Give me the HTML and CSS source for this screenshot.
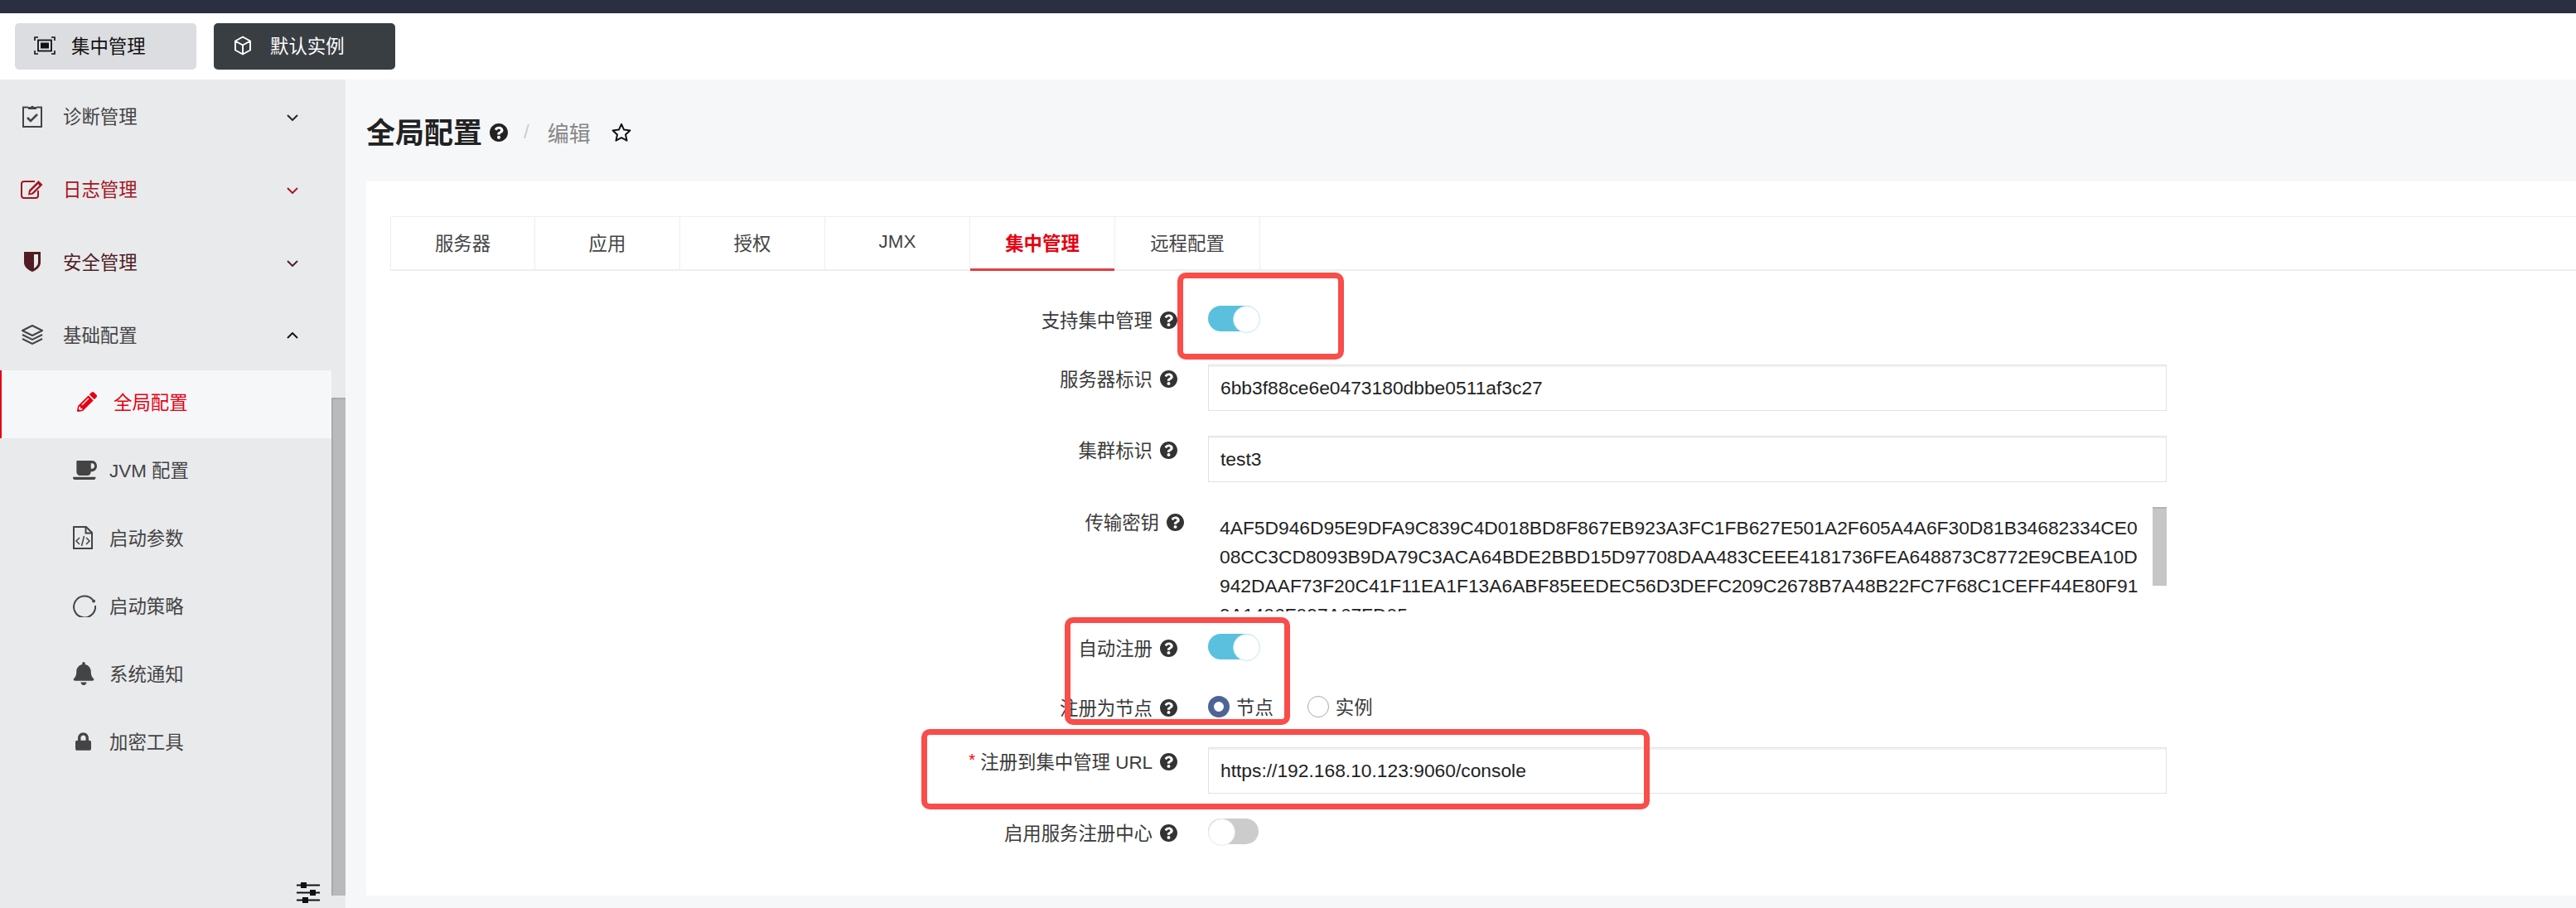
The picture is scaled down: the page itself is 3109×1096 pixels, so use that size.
FILE: index.html
```html
<!DOCTYPE html>
<html lang="zh-CN">
<head>
    <meta charset="UTF-8">
    <title>全局配置</title>
    <link rel="stylesheet" href="styles.css">
</head>
<body>
    <!-- shared icons -->
    <svg class="sprite" xmlns="http://www.w3.org/2000/svg">
        <symbol id="i-help" viewBox="8 8 496 496"><path d="M504 256c0 136.997-111.043 248-248 248S8 392.997 8 256C8 119.083 119.043 8 256 8s248 111.083 248 248zM262.655 90c-54.497 0-89.255 22.957-116.549 63.758-3.536 5.286-2.353 12.415 2.715 16.258l34.699 26.31c5.205 3.947 12.621 3.008 16.665-2.122 17.864-22.658 30.113-35.797 57.303-35.797 20.429 0 45.698 13.148 45.698 32.958 0 14.976-12.363 22.667-32.534 33.976C247.128 238.528 216 254.941 216 296v4c0 6.627 5.373 12 12 12h56c6.627 0 12-5.373 12-12v-1.333c0-28.462 83.186-29.647 83.186-106.667 0-58.002-60.165-102-116.531-102zM256 338c-25.365 0-46 20.635-46 46 0 25.364 20.635 46 46 46s46-20.636 46-46c0-25.365-20.635-46-46-46z"/></symbol>
        <symbol id="i-down" viewBox="0 0 14 8"><path d="M1 1l6 6 6-6" fill="none" stroke="currentColor" stroke-width="1.9"/></symbol>
    </svg>

    <div class="top-strip"></div>

    <!-- Top toolbar -->
    <div class="toolbar">
        <div class="tool-btn tool-btn-light">
            <svg width="26" height="22" viewBox="0 0 26 22"><path d="M1 5V1h4M21 1h4v4M25 17v4h-4M5 21H1v-4" fill="none" stroke="#111" stroke-width="1.6"/><rect x="5" y="4.5" width="16" height="13" fill="none" stroke="#111" stroke-width="1.8"/><rect x="8" y="7.5" width="10" height="7" fill="#111"/></svg>
            <span class="btn-text">集中管理</span>
        </div>
        <div class="tool-btn tool-btn-dark">
            <svg width="22" height="24" viewBox="0 0 22 24"><path d="M11 1.5l9 5v11l-9 5-9-5v-11zM2 6.5l9 5 9-5M11 11.5v11" fill="none" stroke="#fff" stroke-width="2" stroke-linejoin="round"/></svg>
            <span class="btn-text">默认实例</span>
        </div>
    </div>

    <div class="main">
        <!-- Left sidebar -->
        <aside class="sidebar">
            <div class="nav">
                <div class="nav-item">
                    <span class="nav-ico"><svg width="24" height="28" viewBox="0 0 24 28"><path d="M7 3.5H1v23.500h22V3.500h-6" fill="none" stroke="currentColor" stroke-width="2"/><path d="M7 6V3h3.200a2 2 0 0 1 3.600 0H17v3z" fill="currentColor"/><path d="M6 16l4 4 8-8" fill="none" stroke="currentColor" stroke-width="2.600"/></svg></span>
                    <span class="nav-text">诊断管理</span>
                    <svg class="chevron" width="14" height="8"><use href="#i-down"/></svg>
                </div>
                <div class="nav-item nav-item-log">
                    <span class="nav-ico"><svg width="28" height="23" viewBox="0 0 28 23"><path d="M21 13v6a3 3 0 0 1-3 3H4a3 3 0 0 1-3-3V5a3 3 0 0 1 3-3h13" fill="none" stroke="currentColor" stroke-width="2"/><path d="M10 12.500L21.500 1l5 5L15 17.500l-6 1zM12 14l-1 2.500 2.500-.8 9-9-1.500-1.500z" fill="currentColor" fill-rule="evenodd"/></svg></span>
                    <span class="nav-text">日志管理</span>
                    <svg class="chevron" width="14" height="8"><use href="#i-down"/></svg>
                </div>
                <div class="nav-item nav-item-safe">
                    <span class="nav-ico"><svg width="20" height="24" viewBox="0 0 20 24"><path d="M0 0h20v13c0 5-5 9-10 11C5 22 0 18 0 13z" fill="currentColor"/><path d="M12 3h5v10c0 3-2.500 5.500-5 7z" fill="#e9eaec"/></svg></span>
                    <span class="nav-text">安全管理</span>
                    <svg class="chevron" width="14" height="8"><use href="#i-down"/></svg>
                </div>
                <div class="nav-item">
                    <span class="nav-ico"><svg width="28" height="24" viewBox="0 0 28 24"><path d="M14 1l12 6-12 6L2 7z" fill="none" stroke="currentColor" stroke-width="2" stroke-linejoin="round"/><path d="M2 12l12 6 12-6M2 17l12 6 12-6" fill="none" stroke="currentColor" stroke-width="2"/></svg></span>
                    <span class="nav-text">基础配置</span>
                    <svg class="chevron chevron-up" width="14" height="8"><use href="#i-down"/></svg>
                </div>

                <div class="sub-nav">
                    <div class="sub-item sub-item-active">
                        <span class="sub-ico"><svg width="24" height="24" viewBox="0 0 512 512" fill="currentColor"><path d="M497.9 142.100l-46.100 46.100c-4.700 4.700-12.300 4.700-17 0l-111-111c-4.700-4.700-4.700-12.300 0-17l46.100-46.100c18.700-18.700 49.100-18.700 67.900 0l60.100 60.100c18.800 18.700 18.800 49.100 0 67.900zM284.200 99.800L21.600 362.400.4 483.900c-2.900 16.400 11.400 30.600 27.800 27.800l121.500-21.300 262.600-262.600c4.700-4.700 4.700-12.300 0-17l-111-111c-4.800-4.700-12.400-4.700-17.100 0zM124.100 339.900c-5.500-5.500-5.500-14.300 0-19.800l154-154c5.500-5.500 14.300-5.500 19.800 0s5.500 14.300 0 19.800l-154 154c-5.500 5.500-14.300 5.500-19.800 0zM88 424h48v36.300l-64.500 11.300-31.100-31.100L51.700 376H88v48z"/></svg></span>
                        <span class="nav-text">全局配置</span>
                    </div>
                    <div class="sub-item">
                        <span class="sub-ico"><svg width="29" height="23" viewBox="0 32 640 448" preserveAspectRatio="none" fill="currentColor"><path d="M192 384h192c53 0 96-43 96-96h32c70.600 0 128-57.400 128-128S582.600 32 512 32H120c-13.300 0-24 10.700-24 24v232c0 53 43 96 96 96zM512 96c35.300 0 64 28.700 64 64s-28.700 64-64 64h-32V96h32zm47.700 384H48.300c-47.600 0-61-64-36-64h583.300c25 0 11.800 64-35.900 64z"/></svg></span>
                        <span class="nav-text">JVM 配置</span>
                    </div>
                    <div class="sub-item">
                        <span class="sub-ico"><svg width="24" height="28" viewBox="0 0 24 28"><path d="M1 1h15l7 7v19H1z" fill="none" stroke="currentColor" stroke-width="2"/><path d="M15.500 1v7.500H23" fill="none" stroke="currentColor" stroke-width="2"/><path d="M8 14l-4 4 4 4M16 14l4 4-4 4M13.500 12l-3 12" fill="none" stroke="currentColor" stroke-width="1.500"/></svg></span>
                        <span class="nav-text">启动参数</span>
                    </div>
                    <div class="sub-item">
                        <span class="sub-ico"><svg width="28" height="28" viewBox="0 0 28 28"><path d="M24 7A13 13 0 1 0 27 14" fill="none" stroke="currentColor" stroke-width="2"/><circle cx="25" cy="8.500" r="2" fill="currentColor"/></svg></span>
                        <span class="nav-text">启动策略</span>
                    </div>
                    <div class="sub-item">
                        <span class="sub-ico"><svg width="26" height="28" viewBox="0 0 448 512" fill="currentColor"><path d="M224 512c35.320 0 63.970-28.650 63.970-64H160.030c0 35.350 28.650 64 63.970 64zm215.390-149.710c-19.320-20.760-55.470-51.990-55.470-154.290 0-77.700-54.480-139.900-127.940-155.160V32c0-17.670-14.320-32-31.980-32s-31.980 14.330-31.980 32v20.840C118.560 68.100 64.080 130.300 64.080 208c0 102.300-36.150 133.530-55.470 154.290-6 6.450-8.660 14.160-8.610 21.710.11 16.400 12.980 32 32.100 32h383.800c19.120 0 32-15.600 32.100-32 .05-7.550-2.610-15.270-8.610-21.710z"/></svg></span>
                        <span class="nav-text">系统通知</span>
                    </div>
                    <div class="sub-item">
                        <span class="sub-ico sub-ico-lock"><svg width="19" height="22" viewBox="0 0 448 512" fill="currentColor"><path d="M400 224h-24v-72C376 68.200 307.800 0 224 0S72 68.200 72 152v72H48c-26.500 0-48 21.500-48 48v192c0 26.500 21.500 48 48 48h352c26.500 0 48-21.500 48-48V272c0-26.500-21.500-48-48-48zm-104 0H152v-72c0-39.700 32.300-72 72-72s72 32.300 72 72v72z"/></svg></span>
                        <span class="nav-text">加密工具</span>
                    </div>
                </div>

                <svg class="sliders" width="28" height="25" viewBox="0 0 28 25"><path d="M0 3.500h28M0 12.500h28M0 21.500h28" stroke="#111" stroke-width="2"/><rect x="5" y="0" width="7" height="7" fill="#111"/><rect x="16" y="9" width="7" height="7" fill="#111"/><rect x="7" y="18" width="7" height="7" fill="#111"/></svg>
            </div>
            <div class="side-scroll"><div class="side-thumb"></div></div>
        </aside>

        <!-- Main content -->
        <div class="content">
            <div class="page-head">
                <h1>全局配置</h1>
                <svg class="help help-title"><use href="#i-help"/></svg>
                <span class="crumb-sep">/</span>
                <span class="crumb">编辑</span>
                <svg class="star" width="24" height="24" viewBox="0 0 24 24"><path d="M12 1.800l3.100 6.800 7.300.8-5.400 5 1.500 7.300L12 18.200l-6.500 3.500L7 14.400l-5.400-5 7.300-.8z" fill="none" stroke="#111" stroke-width="2" stroke-linejoin="round"/></svg>
            </div>

            <div class="card">
                <div class="tabs">
                    <div class="tab">服务器</div>
                    <div class="tab">应用</div>
                    <div class="tab">授权</div>
                    <div class="tab">JMX</div>
                    <div class="tab tab-active">集中管理</div>
                    <div class="tab">远程配置</div>
                </div>

                <div class="form">
                    <div class="form-label">支持集中管理<svg class="help"><use href="#i-help"/></svg></div>
                    <div class="form-control row-first"><span class="switch switch-on"></span></div>

                    <div class="form-label">服务器标识<svg class="help"><use href="#i-help"/></svg></div>
                    <div class="form-control"><div class="input">6bb3f88ce6e0473180dbbe0511af3c27</div></div>

                    <div class="form-label">集群标识<svg class="help"><use href="#i-help"/></svg></div>
                    <div class="form-control"><div class="input">test3</div></div>

                    <div class="form-label form-label-key">传输密钥<svg class="help"><use href="#i-help"/></svg></div>
                    <div class="form-control">
                        <div class="textarea">
                            <div class="textarea-text">4AF5D946D95E9DFA9C839C4D018BD8F867EB923A3FC1FB627E501A2F605A4A6F30D81B34682334CE0<br>08CC3CD8093B9DA79C3ACA64BDE2BBD15D97708DAA483CEEE4181736FEA648873C8772E9CBEA10D<br>942DAAF73F20C41F11EA1F13A6ABF85EEDEC56D3DEFC209C2678B7A48B22FC7F68C1CEFF44E80F91<br>9A1406F097A67FD05</div>
                            <div class="textarea-thumb"></div>
                        </div>
                    </div>

                    <div class="form-label">自动注册<svg class="help"><use href="#i-help"/></svg></div>
                    <div class="form-control row-auto"><span class="switch switch-on"></span></div>

                    <div class="form-label form-label-radio">注册为节点<svg class="help"><use href="#i-help"/></svg></div>
                    <div class="form-control row-radio">
                        <label class="radio-item"><span class="radio radio-on"></span><span class="radio-text">节点</span></label>
                        <label class="radio-item"><span class="radio"></span><span class="radio-text">实例</span></label>
                    </div>

                    <div class="form-label"><span class="required">*</span> 注册到集中管理 URL<svg class="help"><use href="#i-help"/></svg></div>
                    <div class="form-control"><div class="input">https://192.168.10.123:9060/console</div></div>

                    <div class="form-label">启用服务注册中心<svg class="help"><use href="#i-help"/></svg></div>
                    <div class="form-control"><span class="switch"></span></div>
                </div>
            </div>
        </div>
    </div>

    <!-- Red annotation boxes drawn over the screenshot -->
    <div class="mark mark-switch"></div>
    <div class="mark mark-auto"></div>
    <div class="mark mark-url"></div>
</body>
</html>
```

FILE: styles.css
```css
/* Base */
* {
    box-sizing: border-box;
}

body {
    margin: 0;
    width: 3109px;
    height: 1096px;
    overflow: hidden;
    position: relative;
    background-color: #fff;
    color: #333;
    font-family: "Liberation Sans", "Noto Sans CJK SC", sans-serif;
    font-size: 22.4px;
}

.sprite {
    display: none;
}

.top-strip {
    height: 16px;
    background-color: #2a3042;
}

/* Toolbar */
.toolbar {
    height: 80px;
    padding: 12px 18px;
    display: flex;
    gap: 21px;
}

.tool-btn {
    width: 219px;
    height: 56px;
    border-radius: 5px;
    display: flex;
    align-items: center;
    padding-bottom: 2px;
}

.btn-text {
    margin-bottom: 2px;
}

.tool-btn-light {
    background-color: #dcdde1;
    color: #111;
    padding-left: 23px;
    gap: 19px;
}

.tool-btn-dark {
    background-color: #393e42;
    color: #fff;
    padding-left: 24px;
    gap: 22px;
}

.main {
    display: flex;
    height: 1000px;
}

/* Sidebar */
.sidebar {
    width: 417px;
    background-color: #e9eaec;
    display: flex;
}

.nav {
    width: 400px;
    display: flex;
    flex-direction: column;
}

.nav-item {
    height: 88px;
    flex-shrink: 0;
    padding: 0 40px 0 25px;
    display: flex;
    align-items: center;
    color: #444;
}

.nav-text {
    margin-bottom: 3px;
}

.nav-item-log {
    color: #a3161f;
}

.nav-item-safe {
    color: #4f1d23;
}

.nav-ico {
    width: 28px;
    margin-right: 23px;
    display: flex;
    justify-content: center;
}

.chevron {
    margin-left: auto;
    margin-top: 4px;
    color: #222;
}

.nav-item-log .chevron {
    color: #a3161f;
}

.nav-item-safe .chevron {
    color: #4f1d23;
}

.chevron-up {
    transform: rotate(180deg);
    color: #111;
    margin-top: 2px;
}

.sub-nav {
    margin-top: -1px;
}

.sub-item {
    height: 82px;
    padding: 0 0 6px 88px;
    display: flex;
    align-items: center;
    color: #444;
}

.sub-item-active {
    background-color: #f6f7f9;
    border-left: 2px solid #e60012;
    padding-left: 86px;
    color: #e60012;
}

.sub-ico {
    width: 29px;
    margin-right: 15px;
    display: flex;
}

.sub-item-active .sub-ico {
    padding-left: 5px;
    margin-right: 20px;
}

.sub-ico-lock {
    padding-left: 3px;
}

.sliders {
    margin: auto 14px 6px auto;
    flex-shrink: 0;
}

.side-scroll {
    width: 17px;
    padding: 384px 0 15px;
}

.side-thumb {
    height: 100%;
    background-color: #b9babc;
    border-left: 2px solid #a9aaac;
    border-top: 2px solid #a9aaac;
}

/* Main content */
.content {
    flex: 1;
    padding: 0 0 15px 25px;
    background-color: #f6f7f9;
    display: flex;
    flex-direction: column;
}

.page-head {
    height: 123px;
    flex-shrink: 0;
    display: flex;
    align-items: center;
}

.page-head h1 {
    margin: 0;
    font-size: 35px;
    font-weight: 700;
    color: #222;
}

.help {
    width: 21px;
    height: 21px;
    margin: 3px 0 0 9px;
    fill: #333;
    flex-shrink: 0;
}

.help-title {
    width: 22px;
    height: 22px;
    margin-left: 9px;
    margin-top: 5px;
    fill: #222;
}

.crumb-sep {
    margin: 3px 0 0 19px;
    color: #ccc;
    font-size: 24px;
}

.crumb {
    margin: 3px 0 0 22px;
    font-size: 26px;
    color: #888;
}

.star {
    margin: 5px 0 0 25px;
}

.card {
    flex: 1;
    background-color: #fff;
    padding: 42px 0 0 29px;
}

/* Tabs */
.tabs {
    height: 66px;
    display: flex;
    border: 1px solid #eee;
    border-right: none;
    border-bottom-width: 2px;
}

.tab {
    width: 175px;
    display: flex;
    align-items: center;
    justify-content: center;
    border-right: 1px solid #eee;
    color: #444;
    position: relative;
    padding-bottom: 3px;
}

.tab:first-child {
    width: 174px;
}

.tab-active {
    color: #e60012;
    font-weight: 700;
}

.tab-active::after {
    content: "";
    position: absolute;
    left: 0;
    right: 0;
    bottom: -2px;
    height: 3px;
    background-color: #e43d3f;
}

/* Form */
.form {
    margin-top: 42px;
    display: grid;
    grid-template-columns: 950px 1157px;
    column-gap: 37px;
    row-gap: 30px;
    align-items: start;
}

.form-label {
    height: 31px;
    display: flex;
    align-items: center;
    justify-content: flex-end;
    color: #3a3a3a;
    white-space: pre;
}

.form-label-key {
    margin-top: 1px;
    margin-right: -8px;
}

.form-label-radio {
    margin-top: -3px;
}

.required {
    color: #f00;
    font-size: 20px;
}

.row-first {
    height: 41px;
}

.row-auto {
    height: 45px;
}

.row-radio {
    height: 32px;
    display: flex;
    gap: 41px;
}

.input {
    height: 56px;
    padding: 0 14px;
    border: 1px solid #e2e2e2;
    box-shadow: inset 0 2px 1px #f1f1f1;
    display: flex;
    align-items: center;
    color: #222;
    font-size: 22.8px;
}

/* last line is cut off by the box, as in a scrolled textarea */
.textarea {
    height: 126px;
    margin-bottom: -3px;
    padding: 8px 17px 0 14px;
    overflow: hidden;
    position: relative;
    line-height: 35px;
    color: #222;
    font-size: 22.8px;
}

.textarea-text {
    white-space: nowrap;
}

.textarea-thumb {
    position: absolute;
    top: 0;
    right: 0;
    width: 17px;
    height: 95px;
    background-color: #c6c6c6;
    border-top: 2px solid #b2b2b2;
}

/* Switch */
.switch {
    display: block;
    width: 61px;
    height: 31px;
    border-radius: 16px;
    background-color: #ccc;
    position: relative;
}

.switch::after {
    content: "";
    position: absolute;
    top: 0;
    left: 0;
    width: 31px;
    height: 31px;
    border-radius: 50%;
    background-color: #fff;
    border: 1px solid #e8e8e8;
}

.switch-on {
    background-color: #5bc0de;
}

.switch-on::after {
    left: 30px;
    border-color: #bfe6f1;
}

/* Radio */
.radio-item {
    display: flex;
    align-items: center;
    height: 26px;
    gap: 8px;
    color: #3a3a3a;
}

.radio-text {
    margin-bottom: 2px;
}

.radio {
    width: 26px;
    height: 26px;
    border-radius: 50%;
    border: 1px solid #aaa;
    background-color: #fff;
}

.radio-on {
    border: 7px solid #4d6594;
}

/* Red annotation boxes */
.mark {
    position: absolute;
    border: 7px solid #f94d4a;
    border-radius: 10px;
}

.mark-switch {
    left: 1421px;
    top: 329px;
    width: 201px;
    height: 105px;
}

.mark-auto {
    left: 1285px;
    top: 745px;
    width: 272px;
    height: 130px;
}

.mark-url {
    left: 1112px;
    top: 880px;
    width: 879px;
    height: 97px;
}
```
